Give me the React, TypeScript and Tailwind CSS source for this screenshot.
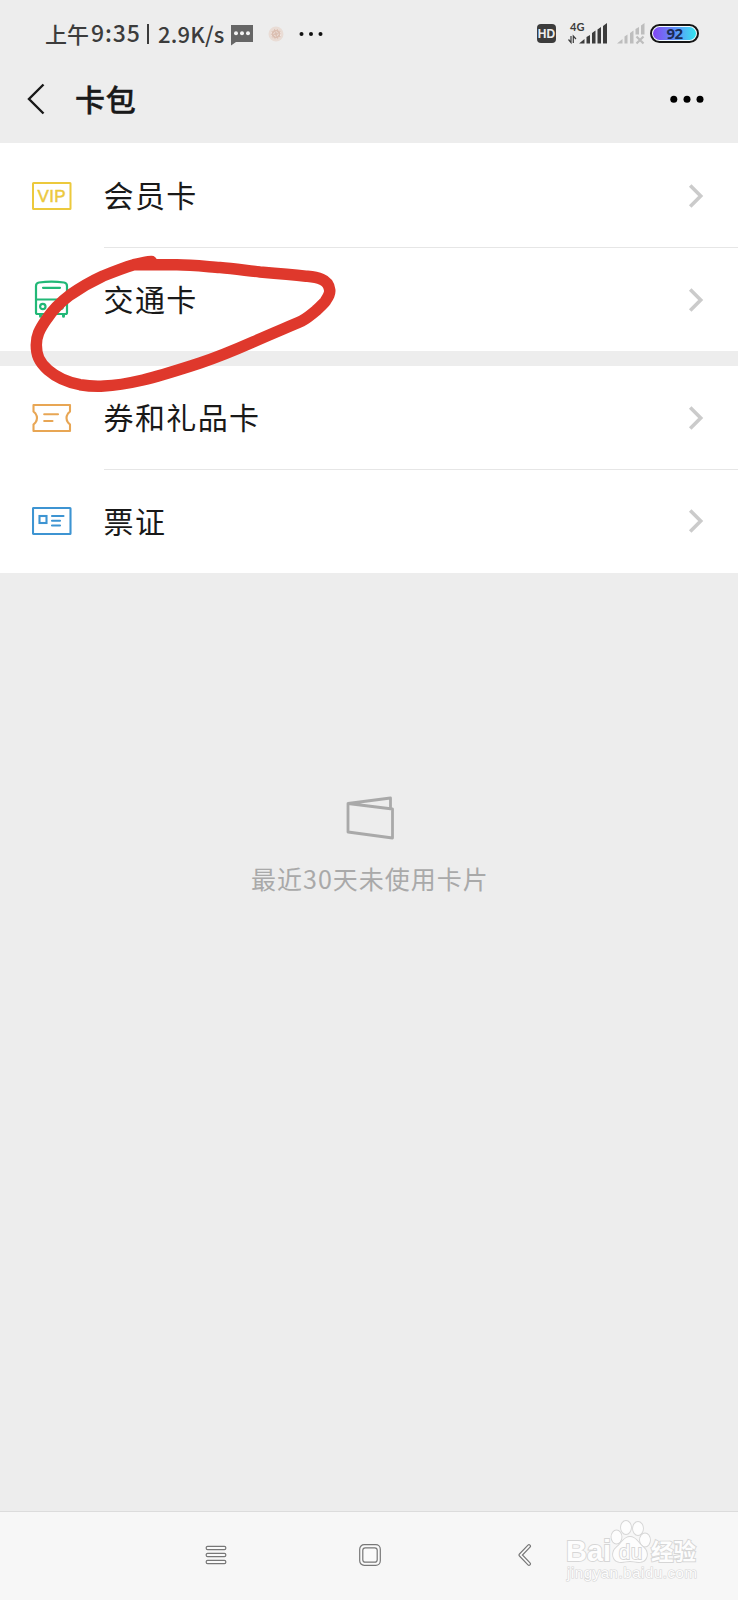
import type { ReactNode } from "react"

function VipIcon() {
  return (
    <svg width="40" height="40" viewBox="0 0 40 40" fill="none">
      <rect x="1" y="7" width="37.5" height="26" rx="0.5" stroke="#ecc93c" strokeWidth="2" />
      <text x="19.5" y="26" textAnchor="middle" fontSize="17" textLength="28" fontFamily="Liberation Sans, sans-serif" fill="#ecc93c" stroke="#ecc93c" strokeWidth="0.5">
        VIP
      </text>
    </svg>
  )
}

function BusIcon() {
  return (
    <svg width="40" height="40" viewBox="0 0 40 40" fill="none" stroke="#22b877" strokeWidth="2.2" strokeLinecap="round">
      <path d="M4 32.5V6Q4 3 7 2.500Q19.500 0.800 32 2.500Q35 3 35 6V32.500Q35 34 33.500 34H5.500Q4 34 4 32.500Z" />
      <path d="M11 7.800H28M4 19.500H35" />
      <circle cx="10.800" cy="26.500" r="2.700" />
      <circle cx="28.200" cy="26.500" r="2.700" />
      <path d="M8.500 35V36.300M31.500 35V36.300" strokeWidth="3" />
    </svg>
  )
}

function CouponIcon() {
  return (
    <svg width="40" height="40" viewBox="0 0 40 40" fill="none" stroke="#e8a654" strokeWidth="2.1" strokeLinecap="round" strokeLinejoin="round">
      <path d="M1.500 7H38V13.500L36 15.500Q33 20 36 24.500L38 26.500V33H1.500V26.500L3.500 24.500Q6.500 20 3.500 15.500L1.500 13.500Z" />
      <path d="M12.200 16.200H26M12.200 23H20.500" />
    </svg>
  )
}

function TicketIcon() {
  return (
    <svg width="40" height="40" viewBox="0 0 40 40" fill="none" stroke="#3d94d2" strokeWidth="2.1" strokeLinecap="round">
      <rect x="1" y="7" width="37.500" height="26" rx="0.500" />
      <rect x="7.500" y="15" width="7" height="7" />
      <path d="M20 15H31.500M20 19.800H28M20 24.500H28" />
    </svg>
  )
}

function Row({ icon, label, divider }: { icon: ReactNode; label: string; divider?: boolean }) {
  return (
    <div className="flex h-full min-h-0 flex-1 items-center pl-[31.500px]">
      <div className="mt-px">{icon}</div>
      <div className={`ml-8 flex h-full flex-1 items-center justify-between border-t pr-[34px] ${divider ? "border-[#e6e6e6]" : "border-transparent"}`}>
        <span className="mb-[3px] text-[30px] leading-none tracking-[1.4px] text-[#191919]">{label}</span>
        <svg width="16" height="26" viewBox="0 0 16 26" fill="none" stroke="#cbcbcb" strokeWidth="3.6">
          <path d="M2.200 2.500L12.700 13L2.200 23.500" />
        </svg>
      </div>
    </div>
  )
}

function StatusBar() {
  return (
    <div className="flex h-[67px] items-center justify-between pl-[45px] pr-[39px] text-[#3c3c3c]">
      <div className="flex items-center whitespace-nowrap text-[22px] font-medium leading-none">
        <span className="mb-[2px] w-[46px]">上午</span>
        <span className="mb-[2px] w-[56px] text-[23px] tracking-[0.900px]">9:35</span>
        <span className="h-[20px] w-[2px] bg-[#3c3c3c]" />
        <span className="mb-[2px] ml-[9px] w-[71px] text-[22px] tracking-[0.200px]">2.9K/s</span>
        <svg width="24" height="22" viewBox="0 0 24 22" className="ml-[1px] mt-[2px]">
          <path d="M1 1H23V18H6L1 21.500Z" fill="#666" />
          <g fill="#f4f4f4">
            <circle cx="6" cy="9.300" r="2" />
            <circle cx="12" cy="9.300" r="2" />
            <circle cx="18" cy="9.300" r="2" />
          </g>
        </svg>
        <svg width="16" height="16" viewBox="0 0 16 16" className="ml-[14px]">
          <circle cx="8" cy="8" r="7.500" fill="#e9dcd5" />
          <circle cx="8" cy="8" r="5.200" fill="#dbbfb2" />
          <circle cx="8" cy="8" r="4.800" fill="none" stroke="#f5ece8" strokeDasharray="2 1" />
          <circle cx="8" cy="8" r="2.200" fill="none" stroke="#eee0da" strokeDasharray="2 1" />
        </svg>
        <svg width="24" height="6" viewBox="0 0 24 6" className="ml-[15px]" fill="#111">
          <circle cx="2.500" cy="3" r="2" />
          <circle cx="12" cy="3" r="2" />
          <circle cx="21.500" cy="3" r="2" />
        </svg>
      </div>
      <div className="flex items-center">
        <div className="flex h-[19px] w-[19px] items-center justify-center rounded-[4px] bg-[#3c3c3c] font-['Liberation_Sans',sans-serif] text-[12px] font-bold leading-none text-[#ededed]">
          HD
        </div>
        <svg width="40" height="27" viewBox="0 -4 40 27" className="mb-[5px] ml-[12px]" fill="#3c3c3c">
          <text x="2" y="9" fontSize="11" fontWeight="bold" fontFamily="Lato, sans-serif">
            4G
          </text>
          <path d="M0.500 17.500L3 20.500V14M8 17L5.300 14V21" fill="none" stroke="#3c3c3c" strokeWidth="1.200" />
          <path d="M11 21.500L16.500 17V21.500ZM18.500 21.500V15L22 13V21.500ZM24 21.500V11L27.500 8.500V21.500ZM29.500 21.500V7.500L33 5V21.500ZM35 21.500V4L39 1V21.500Z" />
        </svg>
        <svg width="29" height="23" viewBox="0 0 29 23" className="mb-px ml-[8px]" fill="#bdbdbd">
          <path d="M1 21.500L6.500 17V21.500ZM8.500 21.500V14.500L11.500 12.500V21.500ZM14 21.500V11L17.500 8.500V21.500ZM19.500 12.500V7L23 5V12.500ZM25 12.500V3.500L28.500 1V12.500Z" />
          <path d="M20.500 14.500L27.500 21.500M27.500 14.500L20.500 21.500" stroke="#bdbdbd" strokeWidth="2.200" />
        </svg>
        <div className="ml-[5px] flex h-[19px] w-[49px] rounded-full border-2 border-[#151515] bg-[#f2fbff] p-px">
          <div className="flex flex-1 items-center justify-center rounded-full bg-gradient-to-r from-[#8144f2] via-[#5b8cf8] to-[#2fe6ee] font-['Open_Sans',sans-serif] text-[15px] font-bold leading-none tracking-[-0.500px] text-[#1b2c55]">
            92
          </div>
        </div>
      </div>
    </div>
  )
}

function Header() {
  return (
    <div className="flex h-[76px] items-center pb-[12px] pl-[26px] pr-[32px]">
      <svg width="20" height="34" viewBox="0 0 20 34" fill="none" stroke="#191919" strokeWidth="2.400">
        <path d="M17.500 2.500L3 17L17.500 31.500" />
      </svg>
      <h1 className="mb-[2px] ml-[29px] flex-1 text-[30px] font-medium leading-none tracking-[0.800px] text-[#191919] [-webkit-text-stroke:0.400px_#191919]">卡包</h1>
      <svg width="36" height="8" viewBox="0 0 36 8" fill="#000">
        <circle cx="3.800" cy="4.200" r="3.500" />
        <circle cx="17" cy="4.200" r="3.500" />
        <circle cx="30" cy="4.200" r="3.500" />
      </svg>
    </div>
  )
}

function NavBar() {
  return (
    <div className="relative flex h-[89px] items-center border-t border-[#dcdcdc] bg-[#f7f7f7] pb-[2px]">
      <svg width="22" height="20" viewBox="0 0 22 20" className="ml-[205px]" fill="#fafafa" stroke="#777" strokeWidth="1.200">
        <rect x="1.200" y="1.300" width="19.600" height="3.400" rx="1.400" />
        <rect x="1.200" y="8.300" width="19.600" height="3.400" rx="1.400" />
        <rect x="1.200" y="15.300" width="19.600" height="3.400" rx="1.400" />
      </svg>
      <svg width="22" height="22" viewBox="0 0 22 22" className="ml-[132px]" fill="#fafafa" stroke="#777" strokeWidth="1.200">
        <rect x="0.700" y="0.700" width="20.600" height="20.600" rx="4.500" />
        <rect x="3.800" y="3.800" width="14.400" height="14.400" rx="2.500" />
      </svg>
      <svg width="14" height="22" viewBox="0 0 14 22" className="ml-[137px]" fill="none" strokeLinecap="round" strokeLinejoin="round">
        <path d="M11 2.200L2.500 11L11 19.800" stroke="#777" strokeWidth="4" />
        <path d="M11 2.200L2.500 11L11 19.800" stroke="#fafafa" strokeWidth="1.700" />
      </svg>
      <Watermark />
    </div>
  )
}

function Watermark() {
  return (
    <svg width="140" height="68" viewBox="0 0 140 68" className="absolute left-[562px] top-[4px]" fill="#fdfdfd" stroke="#d6d6d6" strokeWidth="1.800" paintOrder="stroke">
      <text x="4" y="45" fontSize="29" fontWeight="bold" textLength="45" fontFamily="Liberation Sans, sans-serif">
        Bai
      </text>
      <ellipse cx="54.500" cy="21" rx="5" ry="6.500" />
      <ellipse cx="64" cy="11.500" rx="5" ry="6.500" />
      <ellipse cx="76" cy="12.500" rx="5" ry="6.500" />
      <ellipse cx="83" cy="24" rx="5" ry="6.500" />
      <path d="M68 21C74 21 76 27 81 31C88 37 85 46 77 46C73 46 71 45 68 45C65 45 63 46 59 46C51 46 48 37 55 31C60 27 62 21 68 21Z" />
      <text x="57" y="42.500" fontSize="20" textLength="23" fontFamily="Liberation Sans, sans-serif">
        du
      </text>
      <text x="89" y="43.500" fontSize="22.500" fontWeight="bold" textLength="45" fontFamily="Noto Sans CJK SC, sans-serif">
        经验
      </text>
      <text x="5" y="62" fontSize="15" strokeWidth="1.200" textLength="130" fontFamily="Liberation Sans, sans-serif">
        jingyan.baidu.com
      </text>
    </svg>
  )
}

export default function App() {
  return (
    <div className="relative flex h-[1600px] w-[738px] flex-col overflow-hidden bg-[#ededed] font-['Noto_Sans_CJK_SC',sans-serif]">
      <StatusBar />
      <Header />

      <div className="flex h-[208px] flex-col bg-white">
        <Row icon={<VipIcon />} label="会员卡" />
        <Row icon={<BusIcon />} label="交通卡" divider />
      </div>
      <div className="mt-[14.500px] flex h-[207px] flex-col bg-white">
        <Row icon={<CouponIcon />} label="券和礼品卡" />
        <Row icon={<TicketIcon />} label="票证" divider />
      </div>

      <div className="flex flex-1 flex-col items-center pt-[223.500px] text-[#a9a9a9]">
        <svg width="50" height="46" viewBox="0 0 50 46" className="ml-[4px]" fill="none" stroke="currentColor" strokeWidth="2.800" strokeLinejoin="round">
          <path d="M2 7.500L46.500 13V42L2 36ZM2 7.500L44.500 2V12.500" />
        </svg>
        <p className="ml-[2px] mt-[24px] text-[25px] leading-none tracking-[1px]">最近30天未使用卡片</p>
      </div>

      <NavBar />

      {/* hand-drawn ring around the transit card row */}
      <svg width="310" height="145" viewBox="0 0 310 145" className="pointer-events-none absolute left-[28px] top-[252px]" fill="none" stroke="#df382c" strokeWidth="11.500" strokeLinecap="round" strokeLinejoin="round">
        <path d="M123.500 9.500C116 10 111 11.500 105 13C95 16 85 20 75 24C62 30 52 36 42 43C32 50.500 24 59 18.700 67C11 78 8.300 84 8.300 93C8.300 103 11 110 20 118C28 125 38 130 52 132.700C60 134 68 134.500 76 134C90 133.500 102 131 115 128C135 123 153 117 172 111C190 105 208 97.500 225 90C243 82 260 75 273.700 69C280 65.500 284 62 288.700 58C293 54 295 52 297 49.700C300 45 302.200 42 301.700 38C301 32 298 29 293.700 27.300C288 25 283 24.700 278 24.200C262 22.500 250 21.500 232 20C218 18.500 206 16.500 192 15.500C178 14.500 163 13 149 12.800C135 12.500 120 12.800 107 12.800" />
      </svg>
    </div>
  )
}
